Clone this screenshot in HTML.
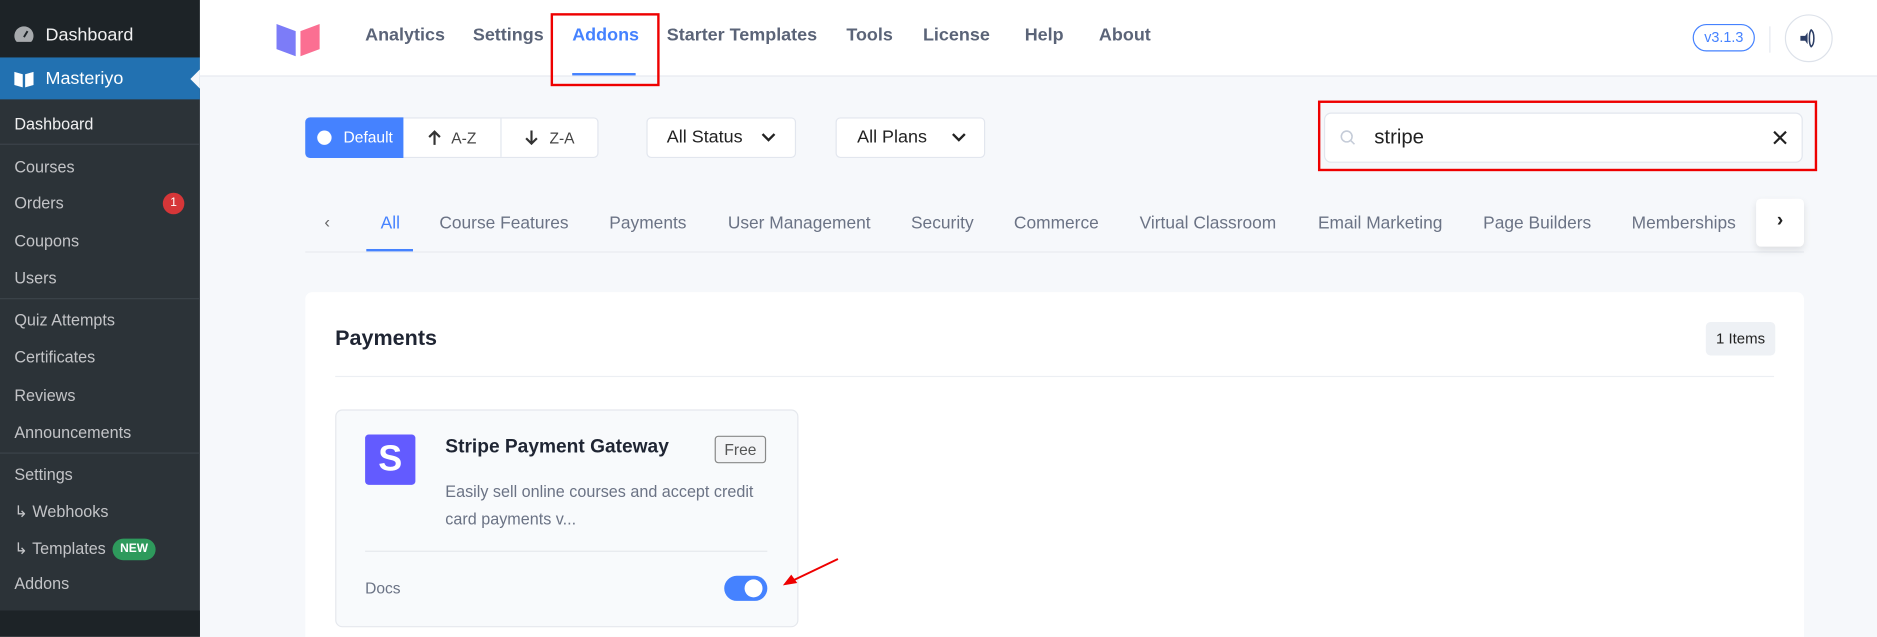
<!DOCTYPE html>
<html><head><meta charset="utf-8"><style>
*{box-sizing:border-box;margin:0;padding:0}
html,body{width:1877px;height:636px;overflow:hidden;background:#f6f8fb}
#w{position:absolute;left:0;top:0;width:1568px;height:532px;transform:scale(1.19707);transform-origin:0 0;font-family:"Liberation Sans",sans-serif;background:#f6f8fb;overflow:hidden}
.a{position:absolute;white-space:nowrap}
.sb{left:0;top:0;width:167px;height:532px;background:#2c3338}
.si{position:absolute;left:12px;color:#c3c4c7;font-size:13.5px}
.sep{position:absolute;left:0;width:167px;height:1px;background:#3c434a}
.nav{position:absolute;top:21px;font-size:15px;font-weight:bold;color:#5b6478}
.btn{position:absolute;background:#fff;border:1px solid #e2e6ee;border-radius:4px;font-size:14px;color:#222}
.tab{position:absolute;top:179px;font-size:14.5px;color:#6b7385}
</style></head><body><div id="w">
<div class="a sb"></div>
<div class="a" style="left:0;top:0;width:167px;height:48px;background:#1d2327"></div>
<svg class="a" style="left:11px;top:21px" width="18" height="16" viewBox="0 0 18 16"><path d="M9 1a8 8 0 0 0-8 8c0 2 .8 4 2 5h12c1.2-1 2-3 2-5a8 8 0 0 0-8-8z" fill="#a7aaad"/><path d="M9 10l3-5" stroke="#1d2327" stroke-width="1.6"/></svg>
<div class="si" style="top:21px;left:38px;font-size:15px;color:#f0f0f1">Dashboard</div>
<div class="a" style="left:0;top:48px;width:167px;height:35px;background:#2271b1"></div>
<div class="a" style="left:159px;top:58px;width:0;height:0;border-top:8px solid transparent;border-bottom:8px solid transparent;border-right:8px solid #f6f8fb"></div>
<svg class="a" style="left:11px;top:58px" width="18" height="16" viewBox="0 0 18 16"><path d="M1 2l7 2v11L1 13z M17 2l-7 2v11l7-2z" fill="#fff"/></svg>
<div class="si" style="top:57px;left:38px;font-size:15px;color:#fff">Masteriyo</div>
<div class="si" style="top:96px;color:#f0f0f1">Dashboard</div>
<div class="sep" style="top:120px"></div>
<div class="si" style="top:132px">Courses</div>
<div class="si" style="top:162px">Orders</div>
<div class="a" style="left:136px;top:161px;width:18px;height:18px;border-radius:50%;background:#d63638;color:#fff;font-size:10px;text-align:center;line-height:18px">1</div>
<div class="si" style="top:194px">Coupons</div>
<div class="si" style="top:225px">Users</div>
<div class="sep" style="top:249px"></div>
<div class="si" style="top:260px">Quiz Attempts</div>
<div class="si" style="top:291px">Certificates</div>
<div class="si" style="top:323px">Reviews</div>
<div class="si" style="top:354px">Announcements</div>
<div class="sep" style="top:378px"></div>
<div class="si" style="top:389px">Settings</div>
<div class="si" style="top:420px">↳ Webhooks</div>
<div class="si" style="top:451px">↳ Templates</div>
<div class="a" style="left:94px;top:450px;width:36px;height:18px;border-radius:9px;background:#2e9a5c;color:#fff;font-size:10px;font-weight:bold;text-align:center;line-height:18px">NEW</div>
<div class="si" style="top:480px">Addons</div>
<div class="a" style="left:0;top:510px;width:167px;height:22px;background:#1d2327"></div>

<div class="a" style="left:167px;top:0;width:1401px;height:64px;background:#fff;border-bottom:1px solid #e6e9ef"></div>
<svg class="a" style="left:229px;top:18px" width="40" height="30" viewBox="0 0 40 30"><path d="M2 2l16 6v21L2 23z" fill="#7c7cf8"/><path d="M38 2l-16 6v21l16-6z" fill="#fb6f92"/></svg>
<div class="nav" style="left:305px">Analytics</div>
<div class="nav" style="left:395px">Settings</div>
<div class="nav" style="left:478px;color:#4582ff">Addons</div>
<div class="a" style="left:478px;top:61px;width:53px;height:2px;background:#4582ff"></div>
<div class="a" style="left:460px;top:11px;width:91px;height:61px;border:2px solid #e00"></div>
<div class="nav" style="left:557px">Starter Templates</div>
<div class="nav" style="left:707px">Tools</div>
<div class="nav" style="left:771px">License</div>
<div class="nav" style="left:856px">Help</div>
<div class="nav" style="left:918px">About</div>
<div class="a" style="left:1414px;top:20px;width:52px;height:23px;border:1px solid #4582ff;border-radius:12px;color:#4582ff;font-size:12px;text-align:center;line-height:21px">v3.1.3</div>
<div class="a" style="left:1478px;top:22px;width:1px;height:22px;background:#e6e9ef"></div>
<div class="a" style="left:1491px;top:12px;width:40px;height:40px;border:1px solid #dde2ea;border-radius:50%"></div>
<svg class="a" style="left:1502px;top:22px" width="18" height="20" viewBox="0 0 18 20"><path d="M2 8h4l2-3v10l-2-3H2z" fill="#2c3e66"/><path d="M11 3c3 2 3 12 0 14c-2-2-2-12 0-14z" fill="none" stroke="#2c3e66" stroke-width="1.3"/></svg>

<div class="btn" style="left:255px;top:98px;width:245px;height:34px"></div>
<div class="a" style="left:255px;top:98px;width:82px;height:34px;background:#4582ff;border-radius:4px 0 0 4px;color:#fff;font-size:13px;line-height:34px;padding-left:32px">Default</div>
<div class="a" style="left:265px;top:109px;width:12px;height:12px;border-radius:50%;background:#fff"></div>
<div class="a" style="left:418px;top:99px;width:1px;height:32px;background:#e2e6ee"></div>
<svg class="a" style="left:357px;top:108px" width="12" height="14"><path d="M6 13V2M1.5 6.5L6 2l4.5 4.5" fill="none" stroke="#333" stroke-width="1.8"/></svg>
<div class="a" style="left:377px;top:108px;font-size:13px;color:#444">A-Z</div>
<svg class="a" style="left:438px;top:108px" width="12" height="14"><path d="M6 1v11M1.5 7.5L6 12l4.5-4.5" fill="none" stroke="#333" stroke-width="1.8"/></svg>
<div class="a" style="left:459px;top:108px;font-size:13px;color:#444">Z-A</div>
<div class="btn" style="left:540px;top:98px;width:125px;height:34px;line-height:32px;padding-left:16px;font-size:15px">All Status</div>
<svg class="a" style="left:636px;top:110px" width="12" height="10"><path d="M1 2l5 5 5-5" fill="none" stroke="#222" stroke-width="2"/></svg>
<div class="btn" style="left:698px;top:98px;width:125px;height:34px;line-height:32px;padding-left:17px;font-size:15px">All Plans</div>
<svg class="a" style="left:795px;top:110px" width="12" height="10"><path d="M1 2l5 5 5-5" fill="none" stroke="#222" stroke-width="2"/></svg>
<div class="a" style="left:1101px;top:84px;width:417px;height:59px;border:2px solid #e00"></div>
<div class="btn" style="left:1106px;top:94px;width:400px;height:42px;border-radius:6px;font-size:17px;line-height:40px;padding-left:41px">stripe</div>
<svg class="a" style="left:1119px;top:108px" width="14" height="14"><circle cx="6" cy="6" r="4.5" fill="none" stroke="#c5ccd8" stroke-width="1.3"/><path d="M9.5 9.5l3 3" stroke="#c5ccd8" stroke-width="1.3"/></svg>
<svg class="a" style="left:1481px;top:109px" width="12" height="12"><path d="M1 1l10 10M11 1L1 11" stroke="#222" stroke-width="1.8"/></svg>

<div class="a" style="left:255px;top:210px;width:1252px;height:1px;background:#e8ebf0"></div>
<div class="a" style="left:271px;top:177px;font-size:14px;color:#666">‹</div>
<div class="tab" style="left:318px;color:#4582ff">All</div>
<div class="a" style="left:306px;top:208px;width:39px;height:2px;background:#4582ff"></div>
<div class="tab" style="left:367px">Course Features</div>
<div class="tab" style="left:509px">Payments</div>
<div class="tab" style="left:608px">User Management</div>
<div class="tab" style="left:761px">Security</div>
<div class="tab" style="left:847px">Commerce</div>
<div class="tab" style="left:952px">Virtual Classroom</div>
<div class="tab" style="left:1101px">Email Marketing</div>
<div class="tab" style="left:1239px">Page Builders</div>
<div class="tab" style="left:1363px">Memberships</div>
<div class="a" style="left:1467px;top:166px;width:40px;height:40px;background:#fff;border-radius:4px;box-shadow:0 3px 6px rgba(0,0,0,.1);text-align:center;line-height:38px;font-size:16px;color:#222;font-weight:bold">›</div>

<div class="a" style="left:255px;top:244px;width:1252px;height:300px;background:#fff;border-radius:6px"></div>
<div class="a" style="left:280px;top:272px;font-size:18px;font-weight:bold;color:#1f2533">Payments</div>
<div class="a" style="left:1425px;top:269px;width:58px;height:28px;background:#eef1f5;border-radius:4px;font-size:12.5px;color:#222;text-align:center;line-height:28px">1 Items</div>
<div class="a" style="left:280px;top:314px;width:1202px;height:1px;background:#eceff3"></div>
<div class="a" style="left:280px;top:342px;width:387px;height:182px;background:#f8fafc;border:1px solid #e5e8ed;border-radius:6px"></div>
<div class="a" style="left:305px;top:363px;width:42px;height:42px;background:#635bff;border-radius:3px;color:#fff;font-size:30px;font-weight:bold;text-align:center;line-height:42px">S</div>
<div class="a" style="left:372px;top:365px;font-size:16px;font-weight:bold;color:#1f2533">Stripe Payment Gateway</div>
<div class="a" style="left:597px;top:364px;width:43px;height:23px;border:1px solid #888;border-radius:3px;background:#f3f4f6;font-size:13px;color:#555;text-align:center;line-height:21px">Free</div>
<div class="a" style="left:372px;top:399px;font-size:13.5px;color:#6b7385;line-height:23px;white-space:normal;width:280px">Easily sell online courses and accept credit card payments v...</div>
<div class="a" style="left:305px;top:460px;width:336px;height:1px;background:#e5e8ed"></div>
<div class="a" style="left:305px;top:484px;font-size:13px;color:#6b7385">Docs</div>
<div class="a" style="left:605px;top:481px;width:36px;height:21px;background:#4582ff;border-radius:11px"></div>
<div class="a" style="left:622px;top:484px;width:15px;height:15px;background:#fff;border-radius:50%"></div>
<svg class="a" style="left:650px;top:464px" width="54" height="30"><path d="M50 3L8 23" stroke="#e00" stroke-width="1.6"/><path d="M4 25l12-2-5-7z" fill="#e00"/></svg>
</div></body></html>
